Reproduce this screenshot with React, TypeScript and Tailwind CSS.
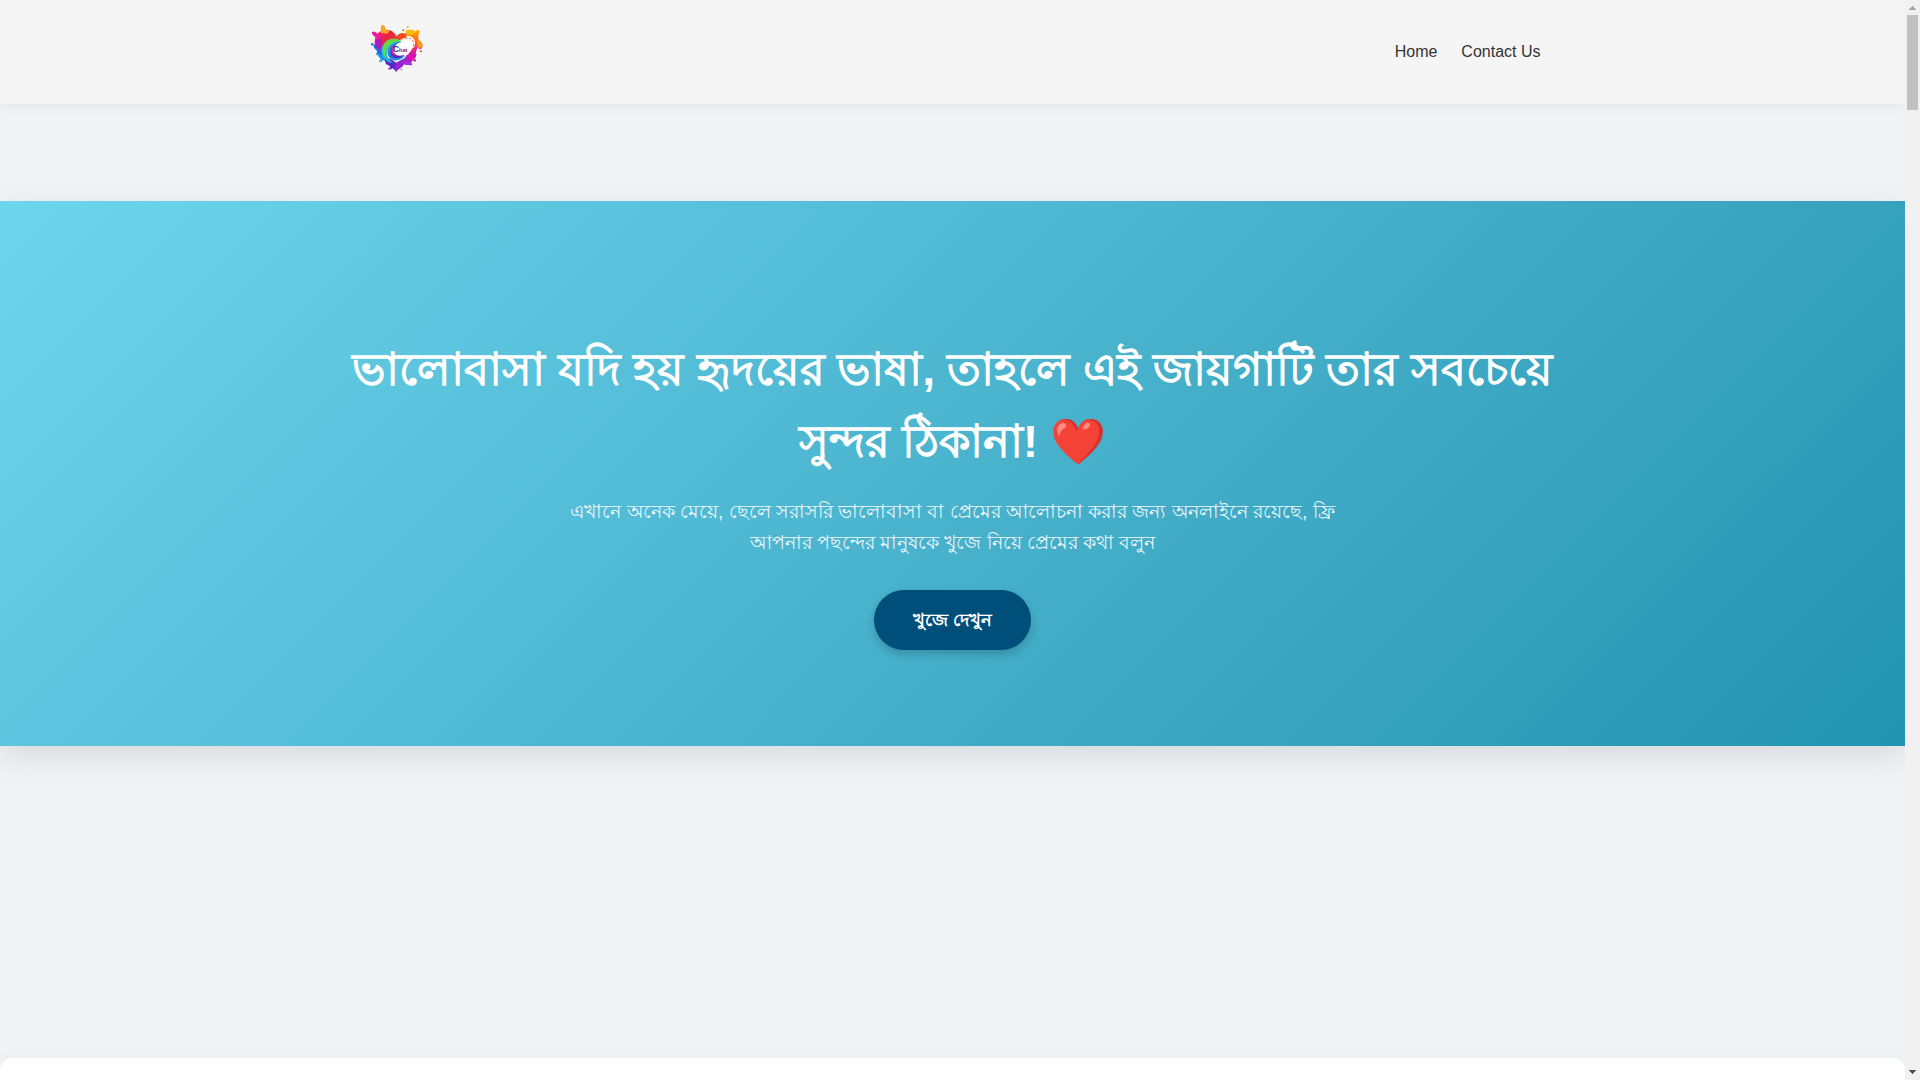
function Logo() {
  return (
    <svg viewBox="60 40 165 150" className="h-[50px] w-[55px]" role="img" aria-label="Chat">
      <defs>
        <linearGradient id="swirlGreen" x1="0" y1="1" x2="1" y2="0">
          <stop offset="0" stopColor="#1fa6e8" />
          <stop offset="0.5" stopColor="#12c7b0" />
          <stop offset="1" stopColor="#a6e82c" />
        </linearGradient>
        <linearGradient id="swirlBlue" x1="0" y1="0" x2="1" y2="1">
          <stop offset="0" stopColor="#22c8e0" />
          <stop offset="0.5" stopColor="#1f6fe0" />
          <stop offset="1" stopColor="#20c4ee" />
        </linearGradient>
        <linearGradient id="rightRim" x1="0" y1="0" x2="0" y2="1">
          <stop offset="0" stopColor="#ffb400" />
          <stop offset="0.4" stopColor="#ff6a10" />
          <stop offset="0.7" stopColor="#f0305c" />
          <stop offset="1" stopColor="#c414c8" />
        </linearGradient>
        <linearGradient id="leftLobe" x1="0" y1="0" x2="1" y2="0.6">
          <stop offset="0" stopColor="#f0206c" />
          <stop offset="0.5" stopColor="#e8263c" />
          <stop offset="1" stopColor="#f4582a" />
        </linearGradient>
      </defs>
      <path d="M136 184C112 170 84 146 78 118C68 86 84 62 108 60C124 59 134 68 140 80C146 68 158 58 176 59C202 61 214 84 206 110C198 142 164 170 136 184Z" fill="#fff" />
      <path d="M78 118C66 84 84 61 108 60C124 59 133 68 140 80L160 88L124 98L100 140Z" fill="url(#leftLobe)" />
      <path d="M93 48C98 43 106 47 105 54L108 62L120 62L112 72L92 70Z" fill="#f8a41c" />
      <path d="M66 72C64 65 72 63 77 68C82 74 88 76 92 72L92 88L84 98C78 92 80 82 72 80Z" fill="#ef1d9c" />
      <path d="M76 96C84 84 90 82 96 92L92 124L80 122C74 114 74 104 76 96Z" fill="#b018c0" />
      <path d="M70 106C76 102 80 106 80 114L92 120L98 144L86 134L78 136L82 124C76 120 70 114 70 106Z" fill="#2368dc" />
      <path d="M80 134L100 138L110 154L98 152L94 158L90 146Z" fill="#1894ee" />
      <path d="M100 140L126 150L148 166L140 186L128 176L122 180L118 168L108 164Z" fill="#5728c8" />
      <path d="M136 160L164 146L170 136L200 134L196 144L188 146L184 160L168 158L156 172L136 186Z" fill="#9824d0" />
      <path d="M158 158L172 154L184 160C190 164 184 170 178 166L166 166Z" fill="#a32ee0" />
      <path d="M170 140L192 112L204 108L198 126L196 144L184 156L172 150Z" fill="#d812a8" />
      <path d="M164 72C174 56 190 58 196 66C200 58 209 58 209 66C209 72 204 74 205 80L206 92C216 96 222 108 214 117C206 122 202 112 201 106C199 120 192 132 182 142C188 126 198 106 194 92C190 82 180 78 168 78Z" fill="url(#rightRim)" />
      <path d="M138 82C146 70 158 66 168 74L170 84C158 84 152 92 146 86Z" fill="#f04a1e" />
      <path d="M166 64C176 56 188 60 195 70L184 76L168 72Z" fill="#f7bd12" />
      <path d="M201 92C208 92 216 96 217 106C217 114 208 120 205 112C202 106 200 98 201 92Z" fill="#ff981a" />
      <path d="M156 94C126 80 94 96 94 124C94 146 112 160 130 160C112 148 106 130 114 114C122 100 138 96 156 94Z" fill="url(#swirlGreen)" />
      <path d="M158 100C140 80 106 82 99 112C96 126 102 142 110 148C102 126 112 108 126 102C138 97 148 98 158 100Z" fill="#62d84a" />
      <path d="M154 96C132 94 112 106 112 128C114 152 142 164 166 138C150 142 132 142 128 124C127 110 140 102 154 96Z" fill="url(#swirlBlue)" />
      <path d="M142 104C124 106 118 120 123 134C130 150 150 150 166 134C150 142 134 138 130 124C129 114 134 108 142 104Z" fill="#5a25bc" />
      <path d="M132 108C124 112 122 120 125 130C128 136 134 138 138 138C130 130 128 118 132 108Z" fill="#e028a0" />
      <path d="M140 106C148 98 160 98 168 92C180 88 190 96 189 108C188 118 182 128 174 132C160 136 144 138 134 128C130 118 134 110 140 106Z" fill="#fff" />
      <path d="M166 88C178 80 190 90 191 102C191 114 182 128 172 134" fill="none" stroke="#f4624c" strokeWidth="3" strokeDasharray="7 5" />
      <circle cx="173" cy="52" r="3" fill="#f7b51a" />
      <circle cx="160" cy="62" r="3" fill="#ef5a20" />
      <circle cx="67" cy="104" r="4" fill="#2376e6" />
      <circle cx="213" cy="125" r="3" fill="#ea3c38" />
      <circle cx="194" cy="152" r="4" fill="#c51cba" />
      <circle cx="90" cy="155" r="3" fill="#18b4e8" />
      <circle cx="117" cy="177" r="3" fill="#b028d0" />
      <circle cx="154" cy="180" r="2" fill="#7b28cf" />
      <text x="129" y="127" fontFamily="Liberation Sans, sans-serif" fontWeight="700" fontSize="25" fill="#27269c">C</text>
      <text x="147" y="126" fontFamily="Liberation Sans, sans-serif" fontWeight="700" fontSize="17" fill="#8e2468">hat</text>
    </svg>
  );
}

function Scrollbar() {
  return (
    <div className="flex w-[15px] shrink-0 flex-col items-center bg-[#f1f1f1]" aria-hidden="true">
      <svg viewBox="0 0 15 15" className="h-[15px] w-[15px]" shapeRendering="crispEdges">
        <path d="M4 10V9H5V8H6V7H7V6H8V7H9V8H10V9H11V10Z" fill="#a3a3a3" />
      </svg>
      <div className="h-[95px] w-[11px] bg-[#c1c1c1]" />
      <svg viewBox="0 0 15 15" className="mt-auto h-[15px] w-[15px]" shapeRendering="crispEdges">
        <path d="M4 5V6H5V7H6V8H7V9H8V8H9V7H10V6H11V5Z" fill="#505050" />
      </svg>
    </div>
  );
}

export default function App() {
  return (
    <div className="flex h-screen overflow-hidden bg-[#f0f2f5] font-['Liberation_Sans',sans-serif]">
      <div className="flex min-w-0 flex-1 flex-col overflow-hidden">
        <header className="relative z-10 bg-[#f5f5f5] shadow-[0_2px_10px_rgba(0,0,0,0.06)]">
          <div className="mx-auto flex h-[104px] max-w-[1200px] items-center justify-between pr-3 pl-[17px]">
            <a href="#" className="mb-2">
              <Logo />
            </a>
            <nav className="flex gap-6 text-base text-[#333]">
              <a href="#">Home</a>
              <a href="#">Contact Us</a>
            </nav>
          </div>
        </header>
        <main className="flex flex-1 flex-col">
          <section className="mt-[97px] bg-linear-135 from-[#6dd5ed] to-[#2193b0] from-0% to-100% px-5 pt-[133px] pb-24 text-center text-white shadow-[0_10px_30px_rgba(0,0,0,0.1)]">
            <h1 className="mx-auto max-w-[1240px] text-[45px] leading-[72px] font-bold">
              ভালোবাসা যদি হয় হৃদয়ের ভাষা, তাহলে এই জায়গাটি তার সবচেয়ে সুন্দর ঠিকানা! ❤️
            </h1>
            <p className="mx-auto mt-[18px] max-w-[800px] text-[19px] leading-[31px] font-light opacity-90">
              এখানে অনেক মেয়ে, ছেলে সরাসরি ভালোবাসা বা প্রেমের আলোচনা করার জন্য অনলাইনে রয়েছে, ফ্রি আপনার পছন্দের মানুষকে খুজে নিয়ে প্রেমের কথা বলুন
            </p>
            <button className="mt-8 h-[60px] rounded-full bg-[#004e7a] px-[39px] text-lg font-bold shadow-[0_4px_10px_rgba(0,0,0,0.2)]">
              খুজে দেখুন
            </button>
          </section>
          <section className="mt-[312px] flex-1 rounded-t-xl bg-white shadow-[0_5px_20px_rgba(0,0,0,0.05)]" />
        </main>
      </div>
      <Scrollbar />
    </div>
  );
}
